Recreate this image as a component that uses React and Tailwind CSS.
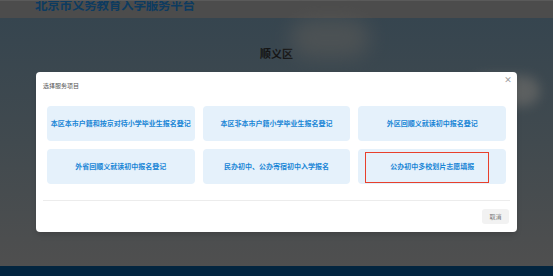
import React from 'react';

const services = [
  '本区本市户籍和按京对待小学毕业生报名登记',
  '本区非本市户籍小学毕业生报名登记',
  '外区回顺义就读初中报名登记',
  '外省回顺义就读初中报名登记',
  '民办初中、公办寄宿初中入学报名',
  '公办初中多校划片志愿填报',
];

const font = { fontFamily: '"Noto Sans CJK SC", "Noto Sans", sans-serif' };

export default function App() {
  return (
    <div className="relative w-[553px] h-[276px] overflow-hidden flex flex-col bg-[#4f4f4f]" style={font}>
      {/* header */}
      <div className="h-[18px] bg-[#4c4c4c] border-t border-[#5a5a5a] pl-[35px] overflow-hidden">
        <div className="text-[12.5px] leading-none font-bold text-[#0d3b60] -mt-[2px] tracking-[-0.2px]">
          北京市义务教育入学服务平台
        </div>
      </div>

      {/* hero */}
      <div className="relative flex-1 bg-gradient-to-b from-[#36454f] via-[#414a4f] to-[#4f4f4f]">
        <div className="absolute left-[290px] top-[0px] w-[80px] h-[40px] rounded-full bg-[#5a5a58] blur-[10px] opacity-60" />
        <div className="absolute left-[470px] top-[58px] w-[70px] h-[30px] rounded-full bg-[#6a6a68] blur-[6px] opacity-70" />
        <div className="pt-[27px] text-center text-[11px] font-bold text-[#151515]">顺义区</div>
      </div>

      {/* footer */}
      <div className="h-[10px] bg-[#03253f]" />

      {/* dialog */}
      <div className="absolute left-[36px] top-[72px] w-[481px] h-[160px] bg-white rounded-[4px] shadow-md flex flex-col">
        <div className="relative h-[25px] flex items-center pl-[7px]">
          <span className="text-[6px] text-[#555] pt-[2px]">选择服务项目</span>
          <span className="absolute right-[5px] top-[4px] text-[8px] leading-none text-[#999] font-bold">×</span>
        </div>
        <div className="px-[11px] pt-[9px] grid grid-cols-3 gap-x-[8px] gap-y-[8px]">
          {services.map((s, i) => (
            <div
              key={i}
              className="relative h-[35px] rounded-[4px] bg-[#e5f1fb] flex items-center justify-center text-[7px] font-bold text-[#1a86d6]"
            >
              {s}
              {i === 5 && (
                <div className="absolute left-[7px] top-[3px] w-[124px] h-[31px] border border-[#e8402c]" />
              )}
            </div>
          ))}
        </div>
        <div className="mx-[7px] mt-[16px] border-t border-[#ececec]" />
        <div className="flex justify-end pr-[8px] pt-[8px]">
          <div className="w-[27px] h-[15px] rounded-[3px] bg-[#f2f2f2] text-[6px] text-[#777] flex items-center justify-center">
            取消
          </div>
        </div>
      </div>
    </div>
  );
}
